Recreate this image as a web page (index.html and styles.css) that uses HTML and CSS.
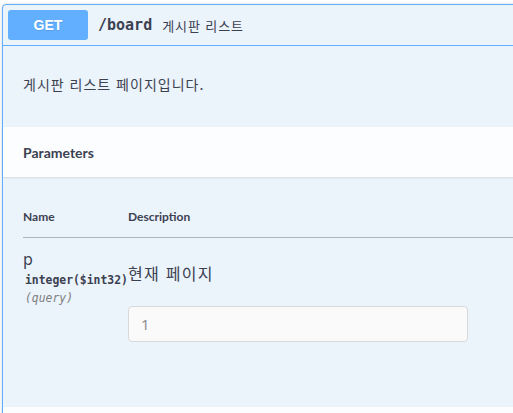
FILE: index.html
```html
<!DOCTYPE html>
<html lang="ko">
<head>
<meta charset="utf-8">
<link rel="stylesheet" href="styles.css">
</head>
<body>
<div class="opblock">
  <div class="summary">
    <span class="method">GET</span>
    <span class="path">/board</span>
    <span class="summary-desc">게시판 리스트</span>
  </div>
  <div class="body">
    <div class="description">게시판 리스트 페이지입니다.</div>
    <div class="section-header">Parameters</div>
    <div class="params">
      <div class="row head">
        <div class="col-name">Name</div>
        <div class="col-desc">Description</div>
      </div>
      <div class="row param">
        <div class="col-name">
          <div class="param-name">p</div>
          <div class="param-type">integer($int32)</div>
          <div class="param-in">(query)</div>
        </div>
        <div class="col-desc">
          <div class="param-desc">현재 페이지</div>
          <input class="param-input" type="text" value="1">
        </div>
      </div>
    </div>
    <div class="section-header section-next"></div>
  </div>
</div>
</body>
</html>
```
FILE: styles.css
```css
html, body {
  margin: 0;
  padding: 0;
  background: #ffffff;
  height: 413px;
  overflow: hidden;
}

.opblock {
  margin: 4px 0 0 2px;
  width: 700px;
  border: 1px solid #61affe;
  border-radius: 4px;
  background: #ebf3fb;
  box-shadow: 0 0 3px rgba(0, 0, 0, 0.19);
  color: #3b4151;
}

.summary {
  display: flex;
  align-items: center;
  padding: 5px;
  border-bottom: 1px solid #61affe;
}

.method {
  width: 80px;
  height: 30px;
  display: flex;
  align-items: center;
  justify-content: center;
  background: #61affe;
  border-radius: 3px;
  color: #ffffff;
  font-family: "Liberation Sans", sans-serif;
  font-weight: 700;
  font-size: 14px;
  text-shadow: 0 1px 0 rgba(0, 0, 0, 0.1);
}

.path {
  padding: 0 10px;
  font-family: "DejaVu Sans Mono", monospace;
  font-size: 15px;
  font-weight: 600;
  color: #3b4151;
}

.summary-desc {
  font-family: "Noto Sans CJK KR", sans-serif;
  font-size: 13px;
  letter-spacing: 0.9px;
  color: #3b4151;
}

.description {
  padding: 28px 20px 33px;
  font-family: "Noto Sans CJK KR", sans-serif;
  font-size: 14px;
  letter-spacing: 1px;
  line-height: 20px;
  color: #3b4151;
}

.section-header {
  height: 50px;
  display: flex;
  align-items: center;
  padding: 0 20px;
  background: rgba(255, 255, 255, 0.8);
  box-shadow: 0 1px 2px rgba(0, 0, 0, 0.1);
  font-family: Lato, sans-serif;
  font-weight: 700;
  font-size: 14px;
  color: #3b4151;
}

.params {
  padding: 0 0 65px 20px;
}

.row {
  display: flex;
}

.col-name {
  width: 105px;
  flex: none;
  white-space: nowrap;
}

.col-desc {
  flex: 1;
}

.head {
  padding: 32px 0 12px;
  border-bottom: 1px solid rgba(59, 65, 81, 0.35);
  font-family: Lato, sans-serif;
  font-weight: 700;
  font-size: 12px;
  line-height: 16px;
}

.param {
  padding-top: 11px;
}

.param-name {
  font-family: "Noto Sans", sans-serif;
  font-size: 16px;
  line-height: 20px;
  color: #3b4151;
}

.param-type {
  margin-top: 2px;
  margin-left: 2px;
  font-family: "DejaVu Sans Mono", monospace;
  font-size: 11.4px;
  font-weight: 700;
  line-height: 18px;
  color: #3b4151;
}

.param-in {
  margin-left: 2px;
  font-family: "DejaVu Sans Mono", monospace;
  font-size: 11.4px;
  font-style: italic;
  line-height: 18px;
  color: #808080;
}

.param-desc {
  margin-top: 14px;
  font-family: "Noto Sans CJK KR", sans-serif;
  font-size: 16px;
  letter-spacing: 1.3px;
  line-height: 20px;
  color: #3b4151;
}

.param-input {
  display: block;
  box-sizing: border-box;
  margin-top: 23px;
  width: 340px;
  height: 36px;
  padding: 0 12px;
  border: 1px solid #d9d9d9;
  border-radius: 4px;
  background: #fafafa;
  font-family: "Noto Sans", sans-serif;
  font-size: 15px;
  color: #8f8f8f;
  outline: none;
}
```
